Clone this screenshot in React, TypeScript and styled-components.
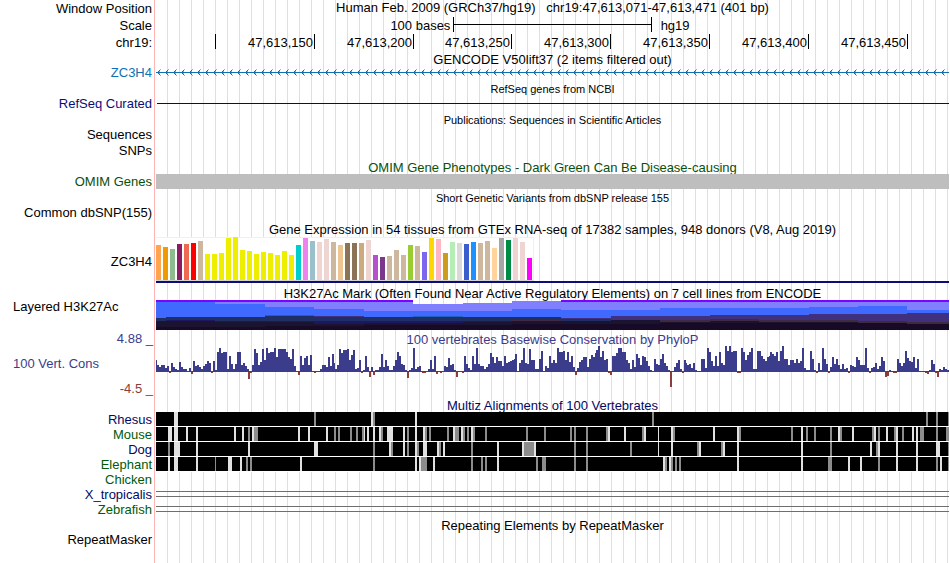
import React from "react";
import styled, { createGlobalStyle } from "styled-components";

const GlobalStyle = createGlobalStyle`
  * { box-sizing: border-box; }
  body {
    margin: 0;
    background: #fff;
    color: #000;
    font: 13px/14px "Liberation Sans", Arial, Helvetica, sans-serif;
  }
`;

const Browser = styled.main`
  min-height: 100vh;
  overflow: hidden;
  background:
    linear-gradient(#ffb4b4, #ffb4b4) 154px 0 / 1px 100% no-repeat,
    linear-gradient(#fff, #fff) 0 0 / 156px 100% no-repeat,
    linear-gradient(to right, transparent 11px, #dcdcfa 11px) 156px 0 / 12px 100% repeat-x;
`;

const Row = styled.section<{ $h: number }>`
  display: grid;
  grid-template-columns: 156px minmax(0, 1fr);
  min-height: ${(p) => p.$h}px;
  padding-right: 1px;
`;

const Label = styled.div<{ $color?: string; $start?: boolean }>`
  display: flex;
  align-items: ${(p) => (p.$start ? "flex-start" : "center")};
  justify-content: ${(p) => (p.$start ? "flex-start" : "flex-end")};
  padding: 0 4px 0 13px;
  color: ${(p) => p.$color ?? "#000"};
  white-space: nowrap;
`;

const Content = styled.div`
  grid-column: 2;
  min-width: 0;
`;

const Title = styled.h2<{ $color?: string; $small?: boolean; $start?: boolean }>`
  grid-column: 2;
  align-self: ${(p) => (p.$start ? "start" : "center")};
  margin: 0;
  padding-top: 2px;
  text-align: center;
  font-weight: 400;
  font-size: ${(p) => (p.$small ? 11 : 13)}px;
  line-height: 12px;
  color: ${(p) => p.$color ?? "#000"};
  white-space: pre;
`;

const ScaleGrid = styled(Content)`
  display: grid;
  grid-template-columns: 1fr 25% 1fr;
  align-items: center;
`;

const ScaleText = styled.span<{ $right?: boolean }>`
  text-align: ${(p) => (p.$right ? "left" : "right")};
  padding: ${(p) => (p.$right ? "0 0 0 9px" : "0 3px 0 0")};
`;

const ScaleBar = styled.div`
  align-self: start;
  display: flex;
  align-items: center;
  height: 15px;
  border: solid #000;
  border-width: 0 1px;

  &::before {
    content: "";
    flex: 1;
    height: 1px;
    background: #000;
  }
`;

const Ruler = styled(Content)`
  display: grid;
  grid-template-columns: 60fr 99fr 99fr 98fr 99fr 99fr 99fr 99fr 41fr;
`;

const Tick = styled.span`
  height: 15px;
  padding-right: 1px;
  border-right: 1px solid #000;
  text-align: right;
  line-height: 17px;
`;

const Plot = styled.svg<{ $h: number }>`
  display: block;
  width: 100%;
  height: ${(p) => p.$h}px;
`;

const Band = styled(Content)`
  background: #bebebe;
`;

const Rule = styled(Content)`
  align-self: center;
  height: 1px;
  margin-left: 1px;
  background: #0c0c50;
`;

const Expression = styled(Content)`
  display: flex;
  flex-direction: column;
  height: 46px;
  border-bottom: 2px solid #0c0c78;
`;

const Chart = styled.div`
  display: flex;
  align-items: flex-end;
  gap: 2px;
  width: 378px;
  height: 44px;
  border: solid #f0f0f0;
  border-width: 1px 1px 1px 0;
  border-bottom-color: #d2d2d2;
  background: #fff;
`;

const Tissue = styled.span<{ $h: number; $color: string }>`
  flex: none;
  width: 5px;
  height: ${(p) => p.$h}px;
  background: ${(p) => p.$color};
`;

const ConsLabels = styled.div`
  display: flex;
  flex-direction: column;
  gap: 11px;
  padding: 2px 3px 0 13px;
  color: #3c3c8c;
`;

const Limit = styled.span<{ $negative?: boolean }>`
  text-align: right;
  color: ${(p) => (p.$negative ? "#8c3c3c" : "#3c3c8c")};
`;

const ConsTitle = styled(Title)`
  height: 16px;
  padding-top: 4px;
`;

const Alignment = styled(Content)`
  height: 15px;
  border-bottom: 1px solid #fff;
`;

const DoubleLine = styled(Content)`
  height: 6px;
  margin-top: 4px;
  border: solid #6e6e6e;
  border-width: 1px 0;
`;

const SPAN = 793;
const NAVY = "#000a64";
const GREEN = "#005a0a";
const TAN = "#cdb79e";
const YELLOW = "#eeee00";
const ROSE = "#eed5d2";

const positions = ["", "47,613,150", "47,613,200", "47,613,250", "47,613,300", "47,613,350", "47,613,400", "47,613,450"];

const tissues: [number, string][] = [
  [35, "#ffa54f"], [33, "#ee9a00"], [31, "#8fbc8f"], [36, "#8b1c62"], [36, "#ee6a50"], [37, "#ff0000"], [39, TAN],
  [26, YELLOW], [26, YELLOW], [27, YELLOW], [42, YELLOW], [43, YELLOW], [30, YELLOW], [29, YELLOW], [26, YELLOW],
  [28, YELLOW], [27, YELLOW], [25, YELLOW], [29, YELLOW], [25, YELLOW],
  [35, "#00cdcd"], [42, "#ee82ee"], [39, "#9ac0cd"], [38, ROSE], [41, ROSE], [38, TAN], [35, "#eec591"],
  [37, "#8b7355"], [37, "#8b7355"], [37, "#cdaa7d"], [40, ROSE], [25, "#b452cd"], [23, "#7a378b"], [24, TAN],
  [30, TAN], [25, TAN], [35, "#9acd32"], [34, TAN], [28, "#7a67ee"], [42, "#ffd700"], [41, "#ffb6c1"],
  [27, "#cd9b1d"], [38, "#b4eeb4"], [37, "#d9d9d9"], [36, "#3a5fcd"], [38, "#1e90ff"], [37, TAN], [39, TAN],
  [32, "#ffd39b"], [42, "#a6a6a6"], [40, "#008b45"], [42, ROSE], [38, ROSE], [22, "#ff00ff"],
];

// Signal windows: left edge of each window, and the top of every stacked layer in it.
const signalEdges = [0, 10, 59, 109, 158, 208, 257, 307, 356, 405, 455, 504, 554, 603, 653, 702, 751, SPAN];
const signalLayers: { color: string; tops: number[] }[] = [
  { color: "#7f00ff", tops: [0, 0, 0, 0, 0, 0, 4, 3, 1, 0, 0, 0, 0, 0, 0, 0, 0] },
  { color: "#8080ff", tops: [2, 2, 2, 2, 2, 2, 4, 3, 1, 2, 2, 2, 2, 2, 2, 2, 2] },
  { color: "#4069ff", tops: [2, 2, 4, 7, 9, 11, 11, 11, 9, 10, 10, 8, 8, 8, 7, 6, 10] },
  { color: "#2060c0", tops: [18, 17, 17, 15, 16, 17, 16, 17, 17, 18, 16, 16, 15, 15, 14, 14, 13] },
  { color: "#403080", tops: [18, 17, 17, 16, 16, 17, 17, 17, 17, 18, 16, 16, 15, 15, 14, 14, 13] },
  { color: "#1e2f66", tops: [18, 17, 17, 16, 17, 17, 17, 17, 17, 19, 20, 20, 19, 20, 20, 21, 22] },
  { color: "#201560", tops: [21, 20, 21, 21, 21, 21, 21, 21, 20, 21, 20, 20, 19, 20, 20, 21, 22] },
  { color: "#402a40", tops: [21, 21, 22, 22, 24, 23, 23, 22, 20, 21, 20, 20, 19, 20, 20, 21, 22] },
  { color: "#1a1430", tops: [21, 21, 22, 22, 24, 23, 23, 22, 21, 21, 20, 22, 21, 22, 22, 23, 24] },
  { color: "#170a26", tops: [27, 27, 27, 26, 26, 25, 25, 25, 24, 24, 24, 23, 23, 23, 23, 23, 24] },
];

// Conservation scores: windows of two-pixel bins, each window with its left edge.
const scores: { x: number; v: number[] }[] = [
  { x: -1, v: [12, 7, 5, 7, 7, 4, 6, -1, 9, 5, 3, 2, 10, 5, 3, 3, 1, 4, -2, 11, 6, 7, 5, 3, 6, 8, 11, 9, -1, 11, 2, 20, 24, 19, 20, 20, 3, 16, 8, 3, 8, 20, 20, 7, 9, 6, 3] },
  { x: 92, v: [-7, -1, 7, 23, 19, 7, 10, 23, 12, 24, 19, 20, 20, 24, 15, 23, 23, 23, 23, 20, 15, 13, 23, 6, 1, -3, 16, 7, 14, 16, 7, 17, 1, -1, 1, 1, 3, 7, 7, 5, 15, 6, 18] },
  { x: 177, v: [9, 3, 7, 23, 19, 22, 22, 23, 12, 17, 22, 3, 4, 12, -1, 2, 16, 5, -5, 5, -3, 2, 2, 5, 18, 5, 12, 6, 2, 2, 6, 12, 20, 16, 8, 7, 2, -6, 2, 4, 24, 1] },
  { x: 259, v: [3, 5, 6, 1] },
  { x: 266, v: [-1, -1, 1, 3, 12, 3, 16, -2, 1, -1, 1, 6, 5, 14, 7, 8, 2, -5, 1, 1, -1, 16, 8, 4, 2, 16, 8, 24, 8, 6, 6, 3, 5, 8, 19, 15, 9, 15, 11, 11, 6, 16, 9, 10, 11, 12, 13] },
  { x: 359, v: [18, 1, 9, 12, 24, 9, 8, 23, 12, 12, 3, 3, 13, 21, 1, 6, 4, 16, 9, 12, 9, 24, 20, 20, 21, 12, 20, 10, 16, 5, -3, 4, 10, 12, 15, 15, 5, 13, 17, 15, 19] },
  { x: 440, v: [22, 26, 15, 21, 12, 13, -1, -3, 16, 16, 19, 24, 24, 20, 20, 12, 9, 3, 12, 5, 18, 14, 7, 16, 15, 11, 6, 2, 1, 13, 8, 7, 13, 18, 9, 6, 2, -15, 1, 5, 9, 12] },
  { x: 524, v: [3, -1, 12] },
  { x: 529, v: [9, 7, 8, 4, 9, 2, 1, 1, 13, 13, 4, 24, 20, 11, 6, 16, 6, 20, 9, 7, 26, 21, 26, 20, 21, 21, -1, -1, 24, 20, 12, 17, 20, 24, 3, 3, 21, 21, 16, 13, 11, 15, 16] },
  { x: 614, v: [20, 18, 16, 20, 11, 21, 26, 13, 13, 7, 12, 12, 9, 13, 9, 11, 24, 4, 2, 2, 21, 13, 2, -1, 9, 2, 24, 13, 8, -1, 5, 15, 8, 13, 7, 3, 8, 3, 4, -1, 7, 6, 5, 15, 12] },
  { x: 703, v: [7, 7, 7, 24, 4, -1, 4, 5, 9, 3, 6, 15, 11, -5, -4, 2, 1, -1, -1, 13, 9, 6, 9, 21, 14, 11, 10, 15, 4, 13, 1, 1, 1, -1, -2, 2, 12, 8, -1, -5, 3, 2, 5, 3, 2] },
];

type Gap = [number, number?];
type Species = { name: string; color: string; light?: Gap[]; dim?: Gap[]; lines?: boolean };

const species: Species[] = [
  {
    name: "Rhesus", color: NAVY,
    light: [[18, 4], [215], [259]],
    dim: [[158], [217], [496], [770], [780], [792, 1]],
  },
  {
    name: "Mouse", color: GREEN,
    light: [[12, 4], [18, 4], [30], [40], [78], [86], [96], [142], [152], [170], [208, 1], [211], [217], [223], [231, 6], [247], [259], [267], [297], [305], [315], [452], [468], [488], [502, 1], [515], [557], [581], [645], [682], [696], [718], [730], [740], [756], [760]],
    dim: [[92], [98, 4], [178], [182], [194], [200], [206], [225], [251], [269], [273], [291], [299, 4], [307], [311], [317], [329], [370], [388], [414], [418], [430], [450], [486], [517], [583], [635], [650], [658], [674], [684], [716], [722], [738], [746], [764, 4], [780], [790, 3]],
  },
  {
    name: "Dog", color: NAVY,
    light: [[18, 6], [40], [92], [158, 4], [233], [247], [259], [267, 4], [281], [287], [341], [366], [378], [502, 1], [515], [543], [567], [581], [645], [714], [722], [740], [760], [780, 4]],
    dim: [[12], [217], [235], [251], [261], [283], [315], [368, 10], [418], [430], [474], [541], [565], [674], [720], [792, 1]],
  },
  {
    name: "Elephant", color: GREEN,
    light: [[12], [18, 4], [40], [72, 4], [84], [144], [259], [263], [277], [341], [507], [513], [581], [645], [692], [704], [740], [760], [784]],
    dim: [[59, 1], [90], [94], [217], [265, 6], [315], [325], [329], [380], [386, 4], [418], [430], [509], [515], [519], [523], [672, 4], [722], [780], [792, 1]],
  },
  { name: "Chicken", color: GREEN },
  { name: "X_tropicalis", color: NAVY, lines: true },
  { name: "Zebrafish", color: GREEN, lines: true },
];

function GeneArrows() {
  return (
    <Plot $h={14} shapeRendering="crispEdges" aria-hidden="true">
      <defs>
        <pattern id="strand" x="1" y="0" width="8" height="14" patternUnits="userSpaceOnUse">
          <path d="M0 6h1v1h-1zM1 5h1v1h-1zM1 7h1v1h-1zM2 4h1v1h-1zM2 8h1v1h-1z" fill="#0c72b4" />
          <path d="M3 3h1v1h-1zM3 9h1v1h-1zM2 5h1v1h-1zM2 7h1v1h-1z" fill="#7ab8dc" />
        </pattern>
      </defs>
      <rect width="100%" height="14" fill="url(#strand)" />
      <rect y="6" width="100%" height="1" fill="#0c72b4" />
    </Plot>
  );
}

function Signal() {
  return (
    <Plot $h={30} viewBox={`0 0 ${SPAN} 30`} preserveAspectRatio="none" shapeRendering="crispEdges" aria-hidden="true">
      {signalLayers.map((layer) =>
        layer.tops.map((top, i) => (
          <rect
            key={layer.color + i}
            x={signalEdges[i]}
            y={top}
            width={signalEdges[i + 1] - signalEdges[i]}
            height={30 - top}
            fill={layer.color}
          />
        )),
      )}
    </Plot>
  );
}

function Conservation() {
  return (
    <Plot $h={52} viewBox={`0 0 ${SPAN} 52`} preserveAspectRatio="none" shapeRendering="crispEdges" aria-hidden="true">
      <rect y="25" width={SPAN} height="1" fill="#3c3c8c" />
      {scores.map((s) =>
        s.v.map((v, i) => (
          <rect
            key={`${s.x}-${i}`}
            x={s.x + i * 2}
            y={v > 0 ? 26 - v : 26}
            width="2"
            height={Math.abs(v)}
            fill={v > 0 ? "#3c3c8c" : "#8c3c3c"}
          />
        )),
      )}
    </Plot>
  );
}

function AlignmentPlot({ light = [], dim = [] }: { light?: Gap[]; dim?: Gap[] }) {
  return (
    <Plot $h={14} viewBox={`0 0 ${SPAN} 14`} preserveAspectRatio="none" shapeRendering="crispEdges" aria-hidden="true">
      <rect width={SPAN} height="14" fill="#000" />
      {light.map(([x, w = 2]) => <rect key={`l${x}`} x={x} width={w} height="14" fill="#e1e1e1" />)}
      {dim.map(([x, w = 2]) => <rect key={`d${x}`} x={x} width={w} height="14" fill="#8c8c8c" />)}
    </Plot>
  );
}

export default function App() {
  return (
    <>
      <GlobalStyle />
      <Browser>
        <Row $h={17}>
          <Label>Window Position</Label>
          <Title $start>{"Human Feb. 2009 (GRCh37/hg19)   chr19:47,613,071-47,613,471 (401 bp)"}</Title>
        </Row>
        <Row $h={17}>
          <Label>Scale</Label>
          <ScaleGrid>
            <ScaleText>100 bases</ScaleText>
            <ScaleBar />
            <ScaleText $right>hg19</ScaleText>
          </ScaleGrid>
        </Row>
        <Row $h={17}>
          <Label>chr19:</Label>
          <Ruler>{positions.map((p) => <Tick key={p}>{p}</Tick>)}</Ruler>
        </Row>

        <Row $h={15}><Title>GENCODE V50lift37 (2 items filtered out)</Title></Row>
        <Row $h={14}>
          <Label $color="#0c72b4">ZC3H4</Label>
          <Content><GeneArrows /></Content>
        </Row>

        <Row $h={16}><Title $small>RefSeq genes from NCBI</Title></Row>
        <Row $h={15}>
          <Label $color="#0c0c78">RefSeq Curated</Label>
          <Rule />
        </Row>

        <Row $h={16}><Title $small>Publications: Sequences in Scientific Articles</Title></Row>
        <Row $h={16}><Label>Sequences</Label></Row>
        <Row $h={16}><Label>SNPs</Label></Row>

        <Row $h={15}><Title $color="#0a500a">OMIM Gene Phenotypes - Dark Green Can Be Disease-causing</Title></Row>
        <Row $h={15}>
          <Label $color="#0a500a">OMIM Genes</Label>
          <Band />
        </Row>

        <Row $h={16}><Title $small>Short Genetic Variants from dbSNP release 155</Title></Row>
        <Row $h={15}><Label>Common dbSNP(155)</Label></Row>

        <Row $h={17}><Title>Gene Expression in 54 tissues from GTEx RNA-seq of 17382 samples, 948 donors (V8, Aug 2019)</Title></Row>
        <Row $h={49}>
          <Label>ZC3H4</Label>
          <Expression>
            <Chart>{tissues.map(([h, c], i) => <Tissue key={i} $h={h} $color={c} />)}</Chart>
          </Expression>
        </Row>

        <Row $h={14}><Title>H3K27Ac Mark (Often Found Near Active Regulatory Elements) on 7 cell lines from ENCODE</Title></Row>
        <Row $h={30}>
          <Label $start>Layered H3K27Ac</Label>
          <Content><Signal /></Content>
        </Row>

        <Row $h={68}>
          <ConsLabels>
            <Limit>4.88 _</Limit>
            <span>100 Vert. Cons</span>
            <Limit $negative>-4.5 _</Limit>
          </ConsLabels>
          <Content>
            <ConsTitle $color="#3c3c8c">100 vertebrates Basewise Conservation by PhyloP</ConsTitle>
            <Conservation />
          </Content>
        </Row>

        <Row $h={14}><Title $color={NAVY}>Multiz Alignments of 100 Vertebrates</Title></Row>
        {species.map((s) => (
          <Row $h={15} key={s.name}>
            <Label $color={s.color}>{s.name}</Label>
            {s.light && <Alignment><AlignmentPlot light={s.light} dim={s.dim} /></Alignment>}
            {s.lines && <DoubleLine />}
          </Row>
        ))}

        <Row $h={16}><Title>Repeating Elements by RepeatMasker</Title></Row>
        <Row $h={14}><Label>RepeatMasker</Label></Row>
      </Browser>
    </>
  );
}
